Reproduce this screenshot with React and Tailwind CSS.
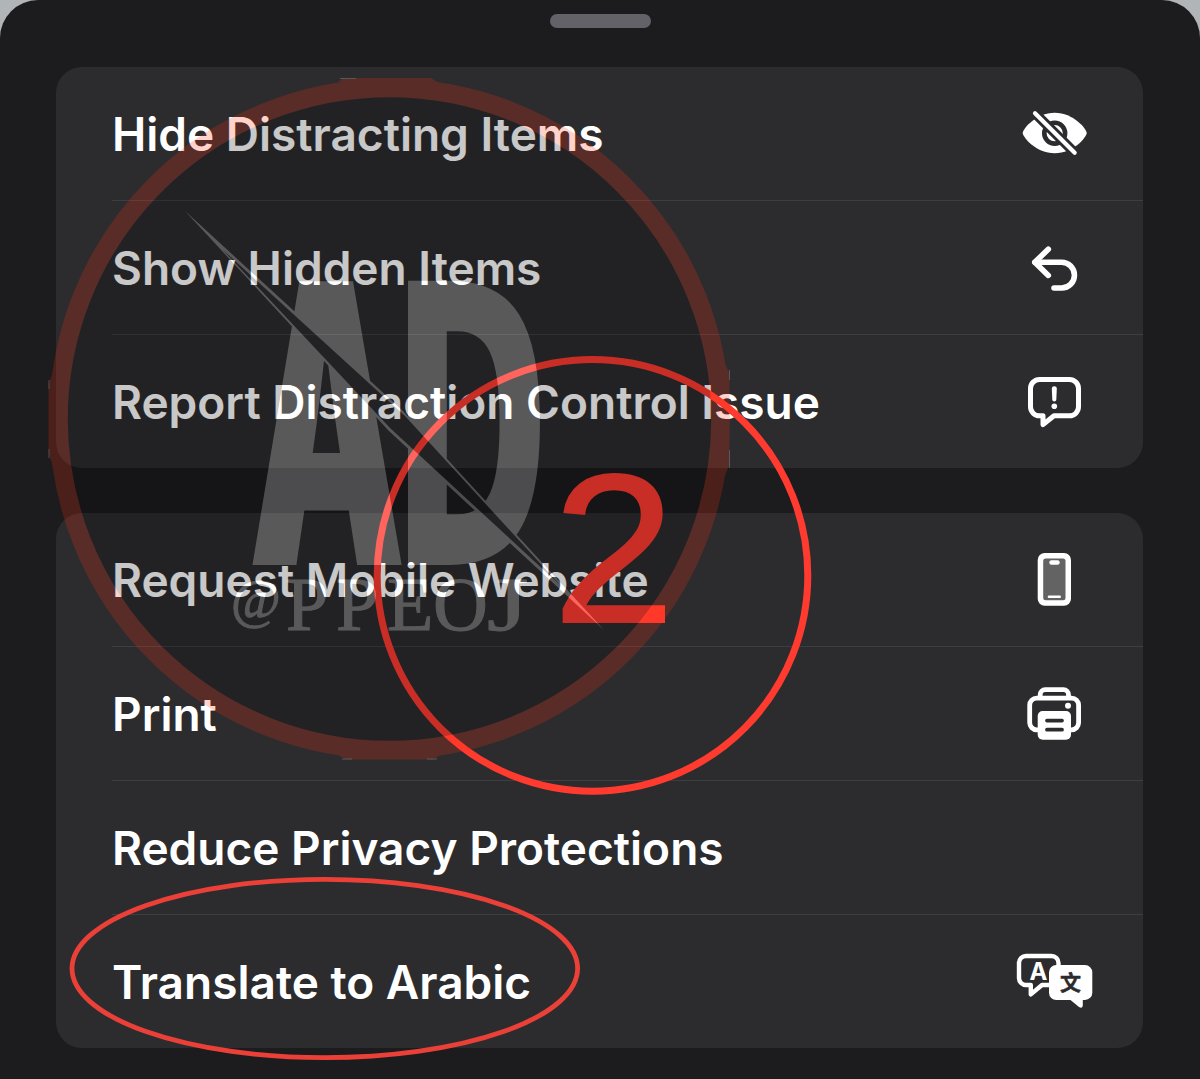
import React from 'react';

const CARD = '#2c2c2e';

function EyeSlashIcon() {
  return (
    <svg className="w-20 h-[133px]" viewBox="0 0 80 133" fill="none">
      <path d="M8.7 66C8.7 62 22 45.7 40.7 45.7S72.7 62 72.7 66S59.4 86.3 40.7 86.3S8.7 70 8.7 66Z" fill="white" />
      <circle cx="40.7" cy="66.2" r="10.4" stroke={CARD} strokeWidth="4.6" />
      <path d="M19 44.3L62.7 87.7" stroke={CARD} strokeWidth="10" />
      <path d="M21 46.3L60.7 85.7" stroke="white" strokeWidth="4.2" strokeLinecap="round" />
    </svg>
  );
}

function UndoIcon() {
  return (
    <svg className="w-20 h-[133px]" viewBox="0 0 80 133" fill="none" stroke="white" strokeWidth="5.6" strokeLinecap="round" strokeLinejoin="round">
      <path d="M34.3 48.2L20.8 61.3L34.3 74.4" />
      <path d="M21 61.3H47.6A12.85 12.85 0 0 1 47.6 87H40" />
    </svg>
  );
}

function ReportIcon() {
  return (
    <svg className="w-20 h-[133px]" viewBox="0 0 80 133" fill="none" stroke="white" strokeWidth="5" strokeLinecap="round" strokeLinejoin="round">
      <path d="M25.5 44.5H55.5A9 9 0 0 1 64.5 53.5V71.8A9 9 0 0 1 55.5 80.8H40L29 89.6V80.8H25.5A9 9 0 0 1 16.5 71.8V53.5A9 9 0 0 1 25.5 44.5Z" />
      <path d="M37.8 53.5Q37.8 51.3 40.3 51.3T42.8 53.5L42.3 65Q42.1 66.4 40.3 66.4T38.3 65Z" fill="white" stroke="none" />
      <circle cx="40.3" cy="71.3" r="2.8" fill="white" stroke="none" />
    </svg>
  );
}

function PhoneIcon() {
  return (
    <svg className="w-20 h-[133px]" viewBox="0 0 80 133" fill="none">
      <rect x="23.7" y="40" width="33.3" height="52.7" rx="7" fill="white" />
      <rect x="29.2" y="45.5" width="22.3" height="41.7" rx="2.5" fill="#636364" />
      <rect x="35.3" y="47.3" width="10.4" height="4.4" rx="2.2" fill="white" />
      <rect x="33.7" y="82.5" width="13.3" height="2.6" rx="1.3" fill="white" />
    </svg>
  );
}

function PrintIcon() {
  return (
    <svg className="w-20 h-[133px]" viewBox="0 0 80 133" fill="none" stroke="white" strokeWidth="4.8" strokeLinecap="round" strokeLinejoin="round">
      <path d="M26.2 50.5V47.7A5 5 0 0 1 31.2 42.7H49.5A5 5 0 0 1 54.5 47.7V50.5" />
      <path d="M25 82.8H22.7A7 7 0 0 1 15.7 75.8V58.1A7 7 0 0 1 22.7 51.1H57.6A7 7 0 0 1 64.6 58.1V75.8A7 7 0 0 1 57.6 82.8H55" />
      <rect x="23.7" y="64" width="33.3" height="28.7" rx="5" fill="white" stroke="none" />
      <path d="M33 73.6H48M33 82.7H48" stroke={CARD} strokeWidth="3.8" />
      <circle cx="54" cy="58.8" r="3" fill="white" stroke="none" />
    </svg>
  );
}

function TranslateIcon() {
  return (
    <svg className="w-20 h-[133px]" viewBox="0 0 80 133" fill="none" stroke="white" strokeWidth="4.4" strokeLinecap="round" strokeLinejoin="round">
      <path d="M12 41H37.5A7 7 0 0 1 44.5 48V63A7 7 0 0 1 37.5 70H28L16.8 79.4V70H12A7 7 0 0 1 5 63V48A7 7 0 0 1 12 41Z" />
      <text x="24.5" y="64.6" textAnchor="middle" fill="white" stroke="none" className="font-['Inter'] font-bold text-[24px]">A</text>
      <path d="M42.5 50H71A7.3 7.3 0 0 1 78.3 57.3V77.7A7.3 7.3 0 0 1 71 85H68.8V90.5Q68.3 94 65 92L56.5 85H42.5A7.3 7.3 0 0 1 35 77.7V57.3A7.3 7.3 0 0 1 42.5 50Z" fill="white" stroke="none" />
      <text x="56.5" y="75" textAnchor="middle" fill={CARD} stroke={CARD} strokeWidth="0.5" className="font-['Noto_Sans_CJK_SC',sans-serif] font-bold text-[21px]">文</text>
    </svg>
  );
}

const GROUPS = [
  [
    { label: 'Hide Distracting Items', icon: EyeSlashIcon },
    { label: 'Show Hidden Items', icon: UndoIcon },
    { label: 'Report Distraction Control Issue', icon: ReportIcon },
  ],
  [
    { label: 'Request Mobile Website', icon: PhoneIcon },
    { label: 'Print', icon: PrintIcon },
    { label: 'Reduce Privacy Protections' },
    { label: 'Translate to Arabic', icon: TranslateIcon },
  ],
];

function MenuRow({ item, last }) {
  const Icon = item.icon;
  return (
    <div className="pl-14">
      <div className={`flex items-center justify-between pr-[49px] ${last ? 'h-[133px]' : 'h-[134px] border-b border-[#3e3e40]'}`}>
        <span className="whitespace-nowrap text-[46px] font-semibold leading-none text-white">{item.label}</span>
        {Icon && <Icon />}
      </div>
    </div>
  );
}

// Red pen marks drawn over the menu
function Marks() {
  return (
    <svg className="absolute inset-0" width="1200" height="1079" viewBox="0 0 1200 1079" fill="none">
      <ellipse cx="592.5" cy="575.4" rx="215.3" ry="215.8" stroke="#ff3b30" strokeWidth="7" />
      <ellipse cx="324.8" cy="968.5" rx="252.8" ry="89.2" stroke="#eb4038" strokeWidth="4.8" />
      <text transform="translate(552.5 622.3) scale(1.04 1)" fill="#ff3b30" stroke="#ff3b30" strokeWidth="1.8" className="font-['Liberation_Sans',sans-serif] text-[212px]">2</text>
    </svg>
  );
}

function Watermark() {
  return (
    <svg className="absolute inset-0 opacity-[0.21]" width="1200" height="1079" viewBox="0 0 1200 1079" fill="none">
      {/* flattened edges of the stamp */}
      <path d="M344 78H431L437 82H338ZM48.5 384V454L54 468V370ZM729.5 374V464L724 478V362ZM346 759.5H433L442 754H337Z" fill="#ff3010" />
      <path d="M340 78.5H356M342 759H352M427 759H437M49 380V389M49 449V458M729.5 370V380M729.5 450V468" stroke="white" />
      <circle cx="389.5" cy="419" r="331" fill="black" stroke="#ff3010" strokeWidth="18.5" />
      <g fill="white">
        <text transform="translate(248 565) scale(0.51 1)" className="font-['Inter',sans-serif] font-black text-[390px]">A</text>
        <text transform="translate(390 565) scale(0.69 1)" className="font-['DejaVu_Sans_Mono',monospace] font-bold text-[390px]">D</text>
      </g>
      <g fill="white" stroke="white" strokeWidth="1" className="font-['Liberation_Serif',serif]">
        <text x="231" y="617" className="text-[54px]">@</text>
        <text x="286 336 387 433" y="630" className="text-[76px]">PPEO</text>
        <text transform="translate(487 630) scale(1.4 1)" className="text-[76px]">J</text>
      </g>
      <path d="M185 211L403 411L604 630L389 431Z" fill="white" />
      <path d="M222 249L405 416L560 585L390 428Z" fill="black" />
    </svg>
  );
}

export default function App() {
  return (
    <div className="relative h-[1079px] w-[1200px] overflow-hidden bg-[#b2b5b7] font-['Inter',sans-serif]">
      <div className="flex h-full flex-col rounded-t-[38px] bg-[#1c1c1e] px-14">
        <div className="flex h-[67px] justify-center pt-3.5">
          <div className="h-3.5 w-[101px] rounded-full bg-[#636268]" />
        </div>
        <div className="flex flex-col gap-[45px]">
          {GROUPS.map((items, i) => (
            <div key={i} className="w-[1087px] rounded-[26px] bg-[#2c2c2e]">
              {items.map((item, j) => (
                <MenuRow key={item.label} item={item} last={j === items.length - 1} />
              ))}
            </div>
          ))}
        </div>
      </div>
      <Marks />
      <Watermark />
    </div>
  );
}
